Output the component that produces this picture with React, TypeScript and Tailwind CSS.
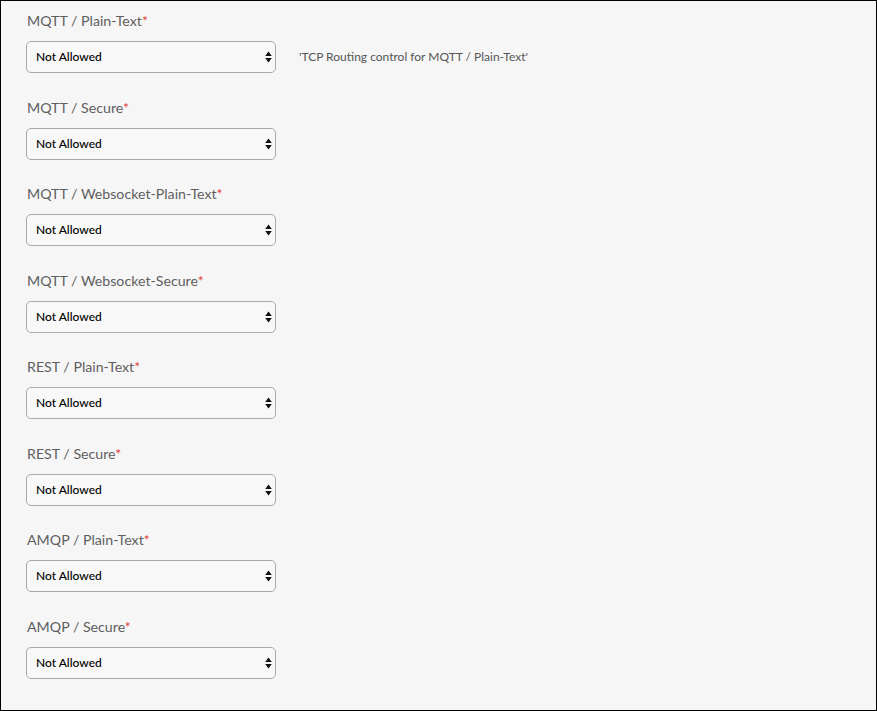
const fields = [
  { label: 'MQTT / Plain-Text', help: "'TCP Routing control for MQTT / Plain-Text'" },
  { label: 'MQTT / Secure' },
  { label: 'MQTT / Websocket-Plain-Text' },
  { label: 'MQTT / Websocket-Secure' },
  { label: 'REST / Plain-Text' },
  { label: 'REST / Secure' },
  { label: 'AMQP / Plain-Text' },
  { label: 'AMQP / Secure' },
]

function Caret() {
  return (
    <svg width="7" height="12" viewBox="0 0 7 12" className="absolute right-[4px] top-[10px] pointer-events-none">
      <path d="M3.5 0.5 L6.8 5 L0.2 5 Z" fill="#111" />
      <path d="M3.5 11.5 L6.8 7 L0.2 7 Z" fill="#111" />
    </svg>
  )
}

export default function App() {
  return (
    <div
      className="w-[877px] h-[711px] border border-black bg-[#f6f6f6] pt-[9px] pl-[25px] box-border overflow-hidden"
      style={{ fontFamily: 'Lato, "Liberation Sans", sans-serif' }}
    >
      {fields.map((f) => (
        <div key={f.label} className="h-[86.57px]">
          <div className="text-[14.2px] leading-[21px] text-[#5e5e5e] mb-[10px] ml-[1px]">
            {f.label}
            <span className="text-[#e0403a]">*</span>
          </div>
          <div className="flex items-center">
            <div className="relative w-[250px] h-[32px]">
              <select
                defaultValue="na"
                className="appearance-none w-full h-full rounded-[5px] border border-[#a9a9a9] bg-[#f8f8f8] pl-[9px] text-[12px] font-medium text-black outline-none"
                style={{ fontFamily: 'Lato, "Liberation Sans", sans-serif' }}
              >
                <option value="na">Not Allowed</option>
                <option value="a">Allowed</option>
              </select>
              <Caret />
            </div>
            <div className="ml-[23px] text-[12px] text-[#555]">{f.help}</div>
          </div>
        </div>
      ))}
    </div>
  )
}
